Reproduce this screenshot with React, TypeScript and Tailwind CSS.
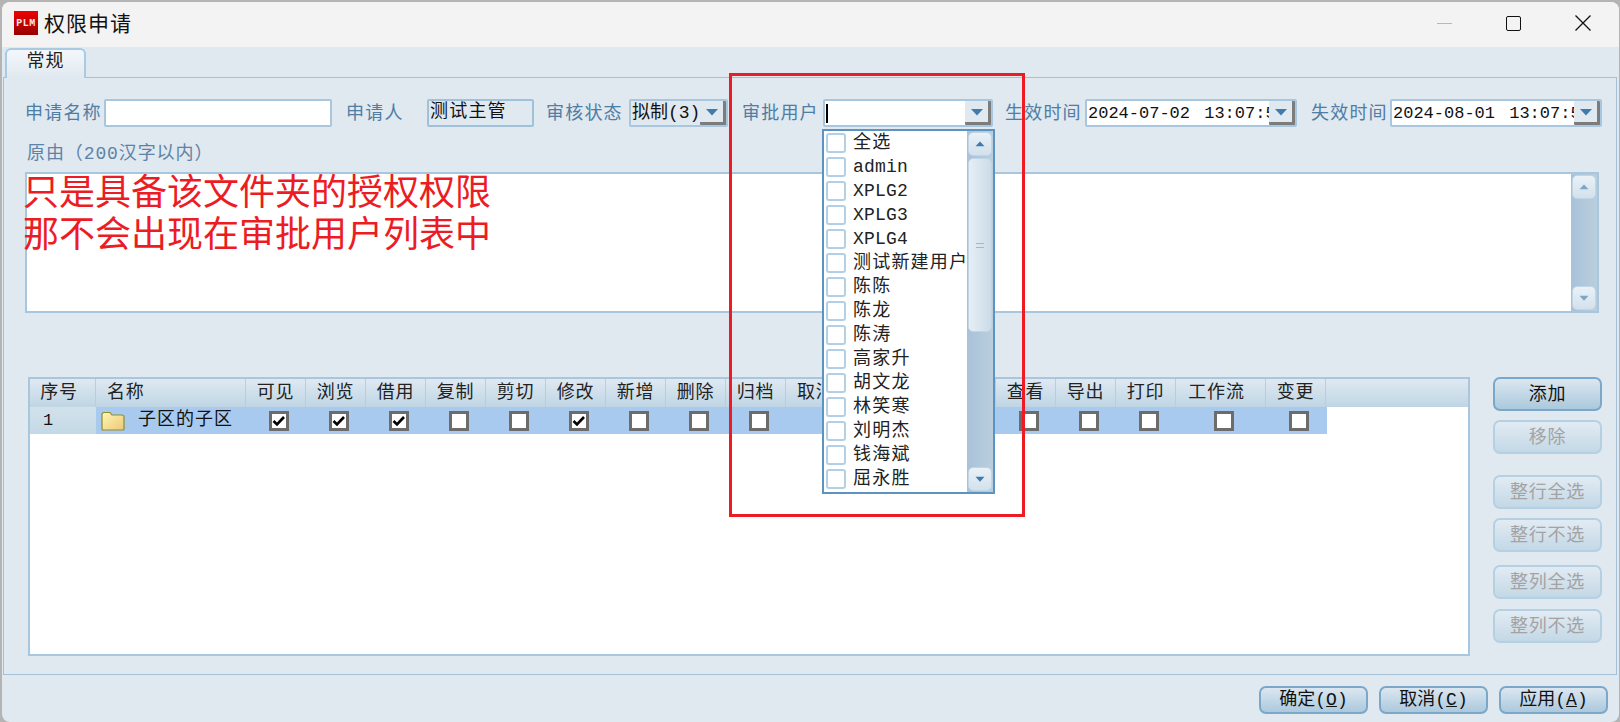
import React from "react";

const Arrow = ({ up = false, light = false }: { up?: boolean; light?: boolean }) => (
  <svg width="14" height="8" viewBox="0 0 14 8" className="block">
    <path d={up ? "M7 0.5 L13 7 L1 7 Z" : "M1 1 L13 1 L7 7.5 Z"} fill={light ? "#7ca6c6" : "#3f7cae"} />
  </svg>
);

const Label = ({ children, w, ml = "" }: { children: React.ReactNode; w: string; ml?: string }) => (
  <div className={`h-[28px] flex items-center pt-[2px] text-[18px] tracking-[1.2px] text-[#4f7da3] whitespace-nowrap shrink-0 ${w} ${ml}`}>{children}</div>
);

const DropBtn = () => (
  <div className="w-[26px] h-full shrink-0 flex items-center justify-center bg-[#e0e8f0] border-r-[3px] border-b-[3px] border-r-[#7c7c7c] border-b-[#7c7c7c] rounded-[1px]">
    <Arrow />
  </div>
);

const DateField = ({ value }: { value: string }) => (
  <div className="w-[212px] h-[28px] shrink-0 flex border-2 border-[#a8c6de] bg-white rounded-[2px]">
    <div className="flex-1 overflow-hidden whitespace-nowrap text-[17px] leading-[25px] [word-spacing:4px] text-[#111] pl-[1px]">{value}</div>
    <DropBtn />
  </div>
);

const Check = ({ on = false }: { on?: boolean }) => (
  <div className="w-[20px] h-[20px] ml-[5px] border-[3px] border-[#6c6c6c] bg-white flex items-center justify-center">
    {on && (
      <svg width="14" height="12" viewBox="0 0 14 12">
        <path d="M1.5 6 L5 9.5 L12 2" stroke="#000" strokeWidth="2.6" fill="none" />
      </svg>
    )}
  </div>
);

type Col = { name: string; w: string; on?: boolean; box?: boolean; pad?: string };
const cols: Col[] = [
  { name: "可见", w: "w-[60px]", on: true, box: true },
  { name: "浏览", w: "w-[60px]", on: true, box: true },
  { name: "借用", w: "w-[60px]", on: true, box: true },
  { name: "复制", w: "w-[60px]", box: true },
  { name: "剪切", w: "w-[60px]", box: true },
  { name: "修改", w: "w-[60px]", on: true, box: true },
  { name: "新增", w: "w-[60px]", box: true },
  { name: "删除", w: "w-[60px]", box: true },
  { name: "归档", w: "w-[60px]", box: true },
  { name: "取消归档", w: "w-[210px]", pad: "justify-start pl-[11px]" },
  { name: "查看", w: "w-[60px]", box: true },
  { name: "导出", w: "w-[60px]", box: true },
  { name: "打印", w: "w-[60px]", box: true },
  { name: "工作流", w: "w-[90px]", box: true, pad: "justify-center pr-[8px]" },
  { name: "变更", w: "w-[60px]", box: true },
];

const users = ["全选", "admin", "XPLG2", "XPLG3", "XPLG4", "测试新建用户", "陈陈", "陈龙", "陈涛", "高家升", "胡文龙", "林笑寒", "刘明杰", "钱海斌", "屈永胜", ""];

const SideBtn = ({ children, mt, on = false }: { children: React.ReactNode; mt: string; on?: boolean }) => (
  <div
    className={`w-[109px] h-[34px] shrink-0 rounded-[7px] border-2 flex items-center justify-center pt-[2px] text-[18px] tracking-[0.7px] ${mt} ${
      on
        ? "border-[#7ba8c9] bg-gradient-to-b from-[#dbe7f0] to-[#abc9dd] text-[#111]"
        : "border-[#b5d0e3] bg-gradient-to-b from-[#e2ebf3] to-[#c3d8e6] text-[#a3a3a3]"
    }`}
  >
    {children}
  </div>
);

const FootBtn = ({ name, k, ml }: { name: string; k: string; ml: string }) => (
  <div className={`w-[109px] h-[28px] rounded-[7px] border-2 border-[#7ba8c9] bg-gradient-to-b from-[#dbe7f0] to-[#abc9dd] flex items-center justify-center pt-[1px] text-[18px] text-[#111] whitespace-nowrap ${ml}`}>
    {name}(<span className="underline">{k}</span>)
  </div>
);

const Scrollbar = ({ children }: { children?: React.ReactNode }) => (
  <div className="w-[26px] h-full shrink-0 flex flex-col justify-between bg-gradient-to-r from-[#a8c2d9] to-[#bacfdd] p-[1px]">
    {children}
  </div>
);

const ScrollBtn = ({ up = false, mode = "dark" }: { up?: boolean; mode?: string }) => (
  <div className="h-[24px] w-full shrink-0 rounded-[5px] bg-gradient-to-b from-[#eaf1f7] to-[#d3e1ec] border border-[#c0d5e5] flex items-center justify-center">
    <div className="scale-75">
      <Arrow up={up} light={mode === "light"} />
    </div>
  </div>
);

export default function App() {
  return (
    <div className="relative w-[1620px] h-[722px] overflow-hidden bg-[#b4b4b4] font-['Liberation_Mono','Noto_Sans_CJK_SC',monospace] pl-[2px] pt-[2px]">
      <div className="w-[1617px] h-[720px] bg-[#e0e8f0] rounded-[8px] overflow-hidden flex flex-col">
        {/* title bar */}
        <div className="h-[45px] shrink-0 bg-[#f3f3f3] flex items-center pl-[12px] pb-[3px]">
          <div className="w-[24px] h-[24px] bg-gradient-to-b from-[#f00000] to-[#960000] flex items-center justify-center font-['Liberation_Mono',monospace] font-bold text-[10px] tracking-[0.5px] text-[#ffe4e4]">
            PLM
          </div>
          <div className="ml-[6px] text-[21px] tracking-[1px] text-[#111] font-['Noto_Sans_CJK_SC',sans-serif]">权限申请</div>
          <div className="ml-auto mr-[28px] flex items-center">
            <div className="w-[15px] h-[1px] bg-[#b8b8b8]" />
            <div className="w-[15px] h-[15px] ml-[54px] border-[1.5px] border-[#111] rounded-[2px]" />
            <svg width="16" height="16" viewBox="0 0 16 16" className="ml-[54px]">
              <path d="M0.5 0.5 L15.5 15.5 M15.5 0.5 L0.5 15.5" stroke="#111" strokeWidth="1.3" />
            </svg>
          </div>
        </div>

        {/* tab strip */}
        <div className="h-[30px] shrink-0 pl-[3px] relative z-10">
          <div className="mt-[1px] w-[81px] h-[30px] rounded-t-[6px] border-2 border-b-0 border-[#a8cae2] bg-gradient-to-b from-[#f4f8fb] to-[#e0e8f0] flex items-center justify-center text-[18px] tracking-[1px] text-[#222] pb-[3px]">
            常规
          </div>
        </div>

        {/* panel */}
        <div className="ml-[1px] w-[1614px] h-[598px] shrink-0 border border-[#a3c2da] pl-[21px]">
          <div className="mt-[21px] flex h-[28px]">
            <Label w="w-[79px]">申请名称</Label>
            <div className="w-[228px] h-[28px] shrink-0 border-2 border-[#a8c6de] bg-white rounded-[2px]" />
            <Label w="w-[67px]" ml="ml-[14px]">申请人</Label>
            <div className="ml-[14px] w-[107px] h-[28px] shrink-0 border-2 border-[#a0c1da] bg-[#e0e8f0] rounded-[2px] text-[18px] leading-[23px] tracking-[1.2px] text-[#111] pl-[1px] whitespace-nowrap">
              测试主管
            </div>
            <Label w="w-[83px]" ml="ml-[12px]">审核状态</Label>
            <div className="w-[99px] h-[28px] shrink-0 flex border-2 border-[#a8c6de] bg-[#e0e8f0] rounded-[2px]">
              <div className="flex-1 text-[18px] leading-[25px] text-[#111] pl-[1px] whitespace-nowrap">拟制(3)</div>
              <DropBtn />
            </div>
            <Label w="w-[81px]" ml="ml-[14px]">审批用户</Label>
            <div className="w-[170px] h-[28px] shrink-0 flex border-2 border-[#a8c6de] bg-white rounded-[2px]">
              <div className="flex-1 flex items-center pl-[1px]">
                <div className="w-[2px] h-[19px] bg-black" />
              </div>
              <DropBtn />
            </div>
            <Label w="w-[80px]" ml="ml-[12px]">生效时间</Label>
            <DateField value="2024-07-02 13:07:5" />
            <Label w="w-[79px]" ml="ml-[14px]">失效时间</Label>
            <DateField value="2024-08-01 13:07:5" />
          </div>

          <div className="mt-[17px] h-[20px] pl-[2px] flex items-center text-[18px] tracking-[0.9px] text-[#5d84a6] whitespace-nowrap">
            原由（200汉字以内）
          </div>

          <div className="mt-[8px] w-[1574px] h-[141px] flex border-2 border-[#a8c6de] bg-white">
            <div className="flex-1 text-[36px] leading-[42px] text-[#ed1c24] font-['Noto_Sans_CJK_SC',sans-serif] -mt-[6px] -ml-[4px]">
              <div>只是具备该文件夹的授权权限</div>
              <div>那不会出现在审批用户列表中</div>
            </div>
            <Scrollbar>
              <ScrollBtn up mode="light" />
              <ScrollBtn mode="light" />
            </Scrollbar>
          </div>

          <div className="mt-[64px] flex items-start">
            {/* table */}
            <div className="ml-[3px] w-[1442px] h-[279px] shrink-0 border-2 border-[#a8c6de] bg-white">
              <div className="flex h-[28px] bg-gradient-to-b from-[#dfe9f2] to-[#bfd5e4] text-[18px] tracking-[0.8px] text-[#222]">
                <div className="w-[66px] flex items-center justify-center pr-[7px] border-r border-[#b5cfe1]">序号</div>
                <div className="w-[150px] flex items-center pl-[11px] border-r border-[#b5cfe1]">名称</div>
                {cols.map((c) => (
                  <div key={c.name} className={`${c.w} flex items-center whitespace-nowrap border-r border-[#b5cfe1] ${c.pad ?? "justify-center"}`}>
                    {c.name}
                  </div>
                ))}
              </div>
              <div className="flex h-[27px] w-[1297px] bg-[#a8caef] text-[#111]">
                <div className="w-[66px] h-full flex items-center pl-[13px] text-[17px] bg-gradient-to-b from-[#d2e2ec] to-[#c4d9e6]">1</div>
                <div className="w-[150px] h-full flex items-center pl-[5px] text-[18px] tracking-[1px] whitespace-nowrap">
                  <svg width="24" height="20" viewBox="0 0 24 20" className="shrink-0">
                    <defs>
                      <linearGradient id="folderFill" x1="0" y1="0" x2="1" y2="1">
                        <stop offset="0" stopColor="#fdf6b4" />
                        <stop offset="1" stopColor="#ecc977" />
                      </linearGradient>
                    </defs>
                    <path d="M1 4 Q1 1.5 3 1.5 L9 1.5 L11 4 L21 4 Q23 4 23 6 L23 18 Q23 19 22 19 L2 19 Q1 19 1 18 Z" fill="url(#folderFill)" stroke="#8f8c2e" strokeWidth="1.2" />
                  </svg>
                  <span className="ml-[13px]">子区的子区</span>
                </div>
                {cols.map((c) => (
                  <div key={c.name} className={`${c.w} h-full flex items-center justify-center`}>
                    {c.box && <Check on={c.on} />}
                  </div>
                ))}
              </div>
            </div>

            {/* side buttons */}
            <div className="ml-[23px] flex flex-col">
              <SideBtn mt="mt-0" on>添加</SideBtn>
              <SideBtn mt="mt-[9px]">移除</SideBtn>
              <SideBtn mt="mt-[21px]">整行全选</SideBtn>
              <SideBtn mt="mt-[9px]">整行不选</SideBtn>
              <SideBtn mt="mt-[13px]">整列全选</SideBtn>
              <SideBtn mt="mt-[10px]">整列不选</SideBtn>
            </div>
          </div>
        </div>

        {/* footer */}
        <div className="flex pl-[1257px] pt-[11px]">
          <FootBtn name="确定" k="O" ml="ml-0" />
          <FootBtn name="取消" k="C" ml="ml-[11px]" />
          <FootBtn name="应用" k="A" ml="ml-[11px]" />
        </div>
      </div>

      {/* dropdown popup */}
      <div className="absolute left-[822px] top-[129px] w-[173px] h-[365px] border-2 border-[#5c93c1] bg-white flex overflow-hidden">
        <div className="flex-1 overflow-hidden pl-[2px]">
          {users.map((u, i) => (
            <div key={i} className="h-[24px] flex items-center">
              <div className="w-[20px] h-[20px] shrink-0 rounded-[3px] border-2 border-[#b2d0e6] bg-white" />
              <div className={`ml-[7px] text-[18px] leading-[22px] text-[#222] whitespace-nowrap ${/^[A-Za-z]/.test(u) ? "tracking-[0.2px]" : "tracking-[1.2px]"}`}>{u}</div>
            </div>
          ))}
        </div>
        <Scrollbar>
          <div className="flex flex-col h-full">
            <ScrollBtn up />
            <div className="h-[174px] mt-[2px] rounded-[5px] bg-gradient-to-r from-[#e6eef5] to-[#cbdce8] border border-[#c0d5e5] flex items-center justify-center">
              <div className="w-[8px] h-[5px] border-y border-[#9db9cf]" />
            </div>
            <div className="mt-auto">
              <ScrollBtn />
            </div>
          </div>
        </Scrollbar>
      </div>

      {/* red annotation rectangle */}
      <div className="absolute left-[729px] top-[73px] w-[296px] h-[444px] border-[3px] border-[#ed1c24] pointer-events-none" />
    </div>
  );
}
